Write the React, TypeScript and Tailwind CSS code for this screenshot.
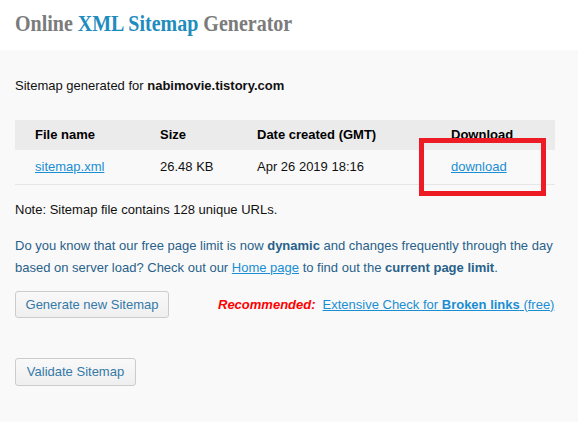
import React from "react";

export default function App() {
  const sans = { fontFamily: '"Liberation Sans", Arial, sans-serif' };
  return (
    <div className="w-[578px] h-[422px] overflow-hidden bg-[#f9f9f9]" style={sans}>
      <div className="h-[50px] bg-white flex items-center pl-[15px]">
        <h1
          className="text-[20px] font-bold text-[#7b7b7b] leading-none pb-[4px] scale-y-[1.12] origin-left"
          style={{ fontFamily: '"Liberation Serif", "Times New Roman", serif' }}
        >
          Online <span className="text-[#1e8cbe]">XML Sitemap</span> Generator
        </h1>
      </div>
      <div className="px-[15px] pr-[23px] text-[13px] text-[#111]">
        <p className="pt-[28px] leading-[16px]">
          Sitemap generated for <b>nabimovie.tistory.com</b>
        </p>
        <div className="relative mt-[26px]">
          <div className="h-[30px] bg-[#ebebeb] flex items-center font-bold text-black">
            <span className="w-[145px] pl-[20px]">File name</span>
            <span className="w-[97px]">Size</span>
            <span className="w-[194px]">Date created (GMT)</span>
            <span>Download</span>
          </div>
          <div className="h-[35px] border-b border-[#e6e6e6] flex items-center">
            <span className="w-[145px] pl-[20px]">
              <a className="text-[#1a8ed3] underline">sitemap.xml</a>
            </span>
            <span className="w-[97px]">26.48 KB</span>
            <span className="w-[194px]">Apr 26 2019 18:16</span>
            <span>
              <a className="text-[#1a8ed3] underline">download</a>
            </span>
          </div>
          <div className="absolute left-[404px] top-[18px] w-[127px] h-[58px] border-[5px] border-[#ed1c24]" />
        </div>
        <p className="mt-[17px] leading-[16px]">Note: Sitemap file contains 128 unique URLs.</p>
        <p className="mt-[17px] leading-[22px] text-[#28618a]">
          Do you know that our free page limit is now <b>dynamic</b> and changes frequently through the day
          based on server load? Check out our <a className="text-[#1a8ed3] underline">Home page</a> to find
          out the <b>current page limit</b>.
        </p>
        <div className="mt-[12px] flex items-center whitespace-nowrap">
          <button className="shrink-0 w-[154px] h-[27px] border border-[#cccccc] rounded-[3px] bg-gradient-to-b from-[#f9f9f9] to-[#efefef] text-[#3479a8] text-[13px]">
            Generate new Sitemap
          </button>
          <span className="ml-[49px] text-[#ff0000] italic font-bold">Recommended:</span>
          <a className="ml-[7px] text-[#1a8ed3] underline">
            Extensive Check for <b>Broken links</b> (free)
          </a>
        </div>
        <div className="mt-[40px]">
          <button className="w-[121px] h-[28px] border border-[#cccccc] rounded-[3px] bg-gradient-to-b from-[#f9f9f9] to-[#efefef] text-[#3479a8] text-[13px]">
            Validate Sitemap
          </button>
        </div>
      </div>
    </div>
  );
}
